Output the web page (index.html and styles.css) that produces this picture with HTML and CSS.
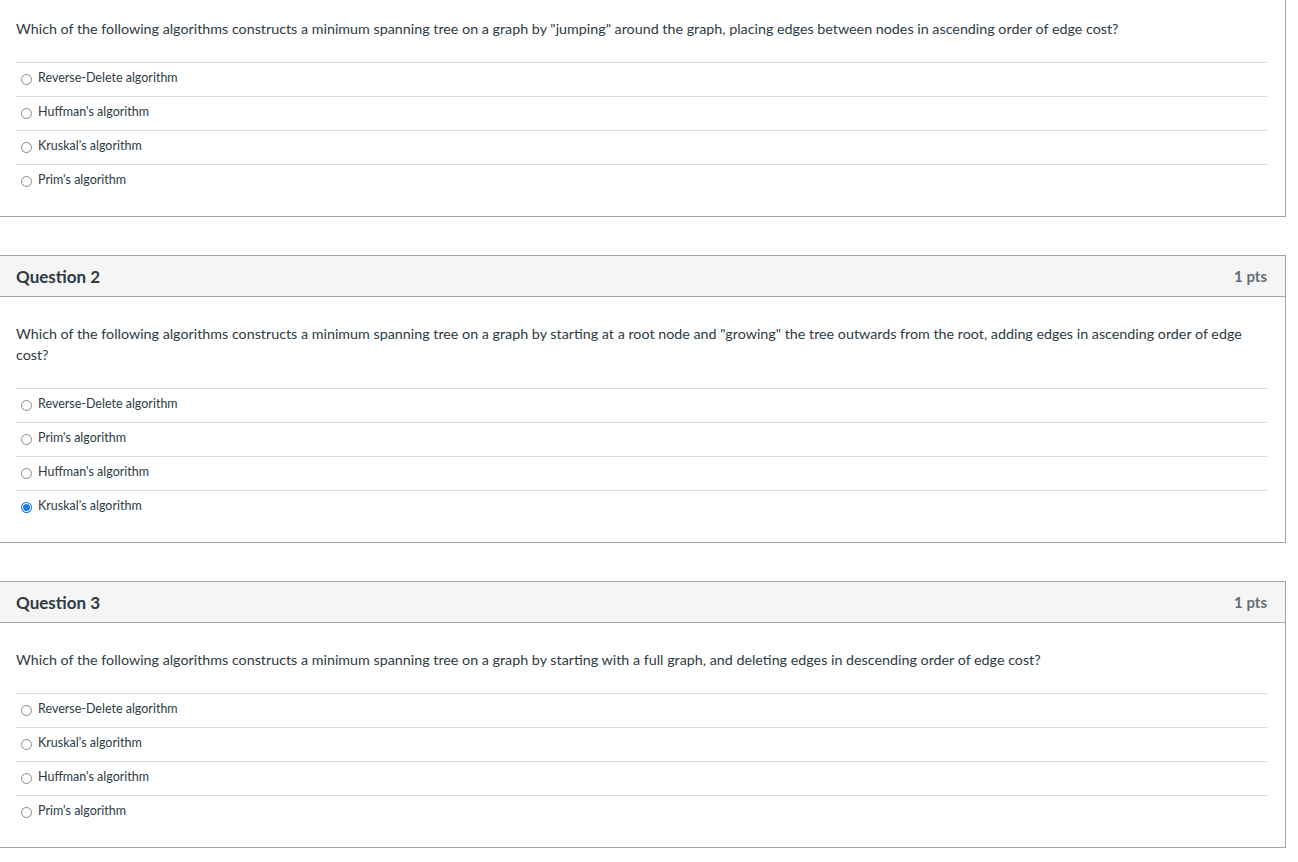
FILE: index.html
```html
<!DOCTYPE html>
<html>
<head>
<meta charset="utf-8">
<link rel="stylesheet" href="styles.css">
</head>
<body>
<div class="quiz">
  <div class="card">
    <div class="body">
      <div class="qtext">Which of the following algorithms constructs a minimum spanning tree on a graph by "jumping" around the graph, placing edges between nodes in ascending order of edge cost?</div>
      <div class="answers">
        <div class="answer"><span class="radio"></span><span class="label">Reverse-Delete algorithm</span></div>
        <div class="answer"><span class="radio"></span><span class="label">Huffman's algorithm</span></div>
        <div class="answer"><span class="radio"></span><span class="label">Kruskal's algorithm</span></div>
        <div class="answer"><span class="radio"></span><span class="label">Prim's algorithm</span></div>
      </div>
    </div>
  </div>
  <div class="card">
    <div class="header"><span class="title">Question 2</span><span class="pts">1 pts</span></div>
    <div class="body">
      <div class="qtext">Which of the following algorithms constructs a minimum spanning tree on a graph by starting at a root node and "growing" the tree outwards from the root, adding edges in ascending order of edge cost?</div>
      <div class="answers">
        <div class="answer"><span class="radio"></span><span class="label">Reverse-Delete algorithm</span></div>
        <div class="answer"><span class="radio"></span><span class="label">Prim's algorithm</span></div>
        <div class="answer"><span class="radio"></span><span class="label">Huffman's algorithm</span></div>
        <div class="answer"><span class="radio checked"></span><span class="label">Kruskal's algorithm</span></div>
      </div>
    </div>
  </div>
  <div class="card">
    <div class="header"><span class="title">Question 3</span><span class="pts">1 pts</span></div>
    <div class="body">
      <div class="qtext">Which of the following algorithms constructs a minimum spanning tree on a graph by starting with a full graph, and deleting edges in descending order of edge cost?</div>
      <div class="answers">
        <div class="answer"><span class="radio"></span><span class="label">Reverse-Delete algorithm</span></div>
        <div class="answer"><span class="radio"></span><span class="label">Kruskal's algorithm</span></div>
        <div class="answer"><span class="radio"></span><span class="label">Huffman's algorithm</span></div>
        <div class="answer"><span class="radio"></span><span class="label">Prim's algorithm</span></div>
      </div>
    </div>
  </div>
</div>
</body>
</html>
```
FILE: styles.css
```css
html, body {
  margin: 0;
  padding: 0;
  background: #fff;
  overflow: hidden;
}
body {
  font-family: Lato, "Liberation Sans", sans-serif;
  color: #2d3b45;
}
.quiz {
  margin-top: -9px;
  margin-left: -1px;
  width: 1287px;
  display: flex;
  flex-direction: column;
  gap: 38px;
}
.card {
  border: 1px solid #a5a5a5;
}
.header {
  height: 40px;
  background: #f5f5f5;
  border-bottom: 1px solid #a5a5a5;
  display: flex;
  align-items: center;
  justify-content: space-between;
  padding: 0 18px 0 16px;
}
.title {
  font-size: 17px;
  font-weight: 700;
  color: #2d3b45;
}
.pts {
  font-size: 15px;
  font-weight: 700;
  color: #666e74;
}
.body {
  padding: 26px 18px 18px 16px;
}
.qtext {
  font-size: 14.3px;
  line-height: 21px;
  color: #2d3b45;
  margin-bottom: 23px;
}
.answer {
  border-top: 1px solid #dcdcdc;
  height: 33px;
  box-sizing: content-box;
  display: flex;
  align-items: flex-start;
  padding-left: 5px;
}
.radio {
  width: 9px;
  height: 9px;
  border: 1px solid #8a8a8a;
  border-radius: 50%;
  margin-right: 6px;
  margin-top: 11px;
  background: #fff;
  box-sizing: content-box;
}
.radio.checked {
  background: #1b7ae8;
  border: 1px dotted #1b7ae8;
  box-shadow: inset 0 0 0 1px #fff;
}
.label {
  font-size: 12.5px;
  line-height: 16px;
  padding-top: 7px;
  color: #2d3b45;
}
```
